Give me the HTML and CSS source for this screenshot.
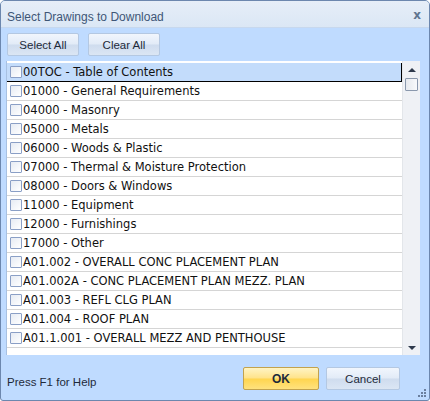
FILE: index.html
```html
<!DOCTYPE html>
<html>
<head>
<meta charset="utf-8">
<link rel="stylesheet" href="styles.css">
</head>
<body>
<div class="window">
  <div class="titlebar">
    <span class="title">Select Drawings to Download</span>
    <span class="close">x</span>
  </div>
  <div class="toolbar">
    <button class="btn">Select All</button>
    <button class="btn">Clear All</button>
  </div>
  <div class="listbox">
    <div class="items">
      <div class="row selected"><span class="cb"></span>00TOC - Table of Contents</div>
      <div class="row"><span class="cb"></span>01000 - General Requirements</div>
      <div class="row"><span class="cb"></span>04000 - Masonry</div>
      <div class="row"><span class="cb"></span>05000 - Metals</div>
      <div class="row"><span class="cb"></span>06000 - Woods &amp; Plastic</div>
      <div class="row"><span class="cb"></span>07000 - Thermal &amp; Moisture Protection</div>
      <div class="row"><span class="cb"></span>08000 - Doors &amp; Windows</div>
      <div class="row"><span class="cb"></span>11000 - Equipment</div>
      <div class="row"><span class="cb"></span>12000 - Furnishings</div>
      <div class="row"><span class="cb"></span>17000 - Other</div>
      <div class="row"><span class="cb"></span>A01.002 - OVERALL CONC PLACEMENT PLAN</div>
      <div class="row"><span class="cb"></span>A01.002A - CONC PLACEMENT PLAN MEZZ. PLAN</div>
      <div class="row"><span class="cb"></span>A01.003 - REFL CLG PLAN</div>
      <div class="row"><span class="cb"></span>A01.004 - ROOF PLAN</div>
      <div class="row"><span class="cb"></span>A01.1.001 - OVERALL MEZZ AND PENTHOUSE</div>
    </div>
    <div class="scrollbar">
      <div class="arrow up"></div>
      <div class="thumb"></div>
      <div class="track"></div>
      <div class="arrow down"></div>
    </div>
  </div>
  <div class="footer">
    <span class="help">Press F1 for Help</span>
    <button class="btn ok">OK</button>
    <button class="btn cancel">Cancel</button>
    <span class="grip">
      <svg width="9" height="9" viewBox="0 0 9 9">
        <rect x="6" y="0" width="2" height="2" fill="#6a7f9e"/>
        <rect x="3" y="3" width="2" height="2" fill="#6a7f9e"/>
        <rect x="6" y="3" width="2" height="2" fill="#6a7f9e"/>
        <rect x="0" y="6" width="2" height="2" fill="#6a7f9e"/>
        <rect x="3" y="6" width="2" height="2" fill="#6a7f9e"/>
        <rect x="6" y="6" width="2" height="2" fill="#6a7f9e"/>
      </svg>
    </span>
  </div>
</div>
</body>
</html>
```

FILE: styles.css
```css
html, body {
  margin: 0;
  padding: 0;
  background: #ffffff;
}
.window {
  box-sizing: border-box;
  width: 430px;
  height: 401px;
  border: 1px solid #6c87ae;
  border-radius: 5px 5px 3px 3px;
  background: #bfdbff;
  display: flex;
  flex-direction: column;
  position: relative;
  overflow: hidden;
  font-family: "DejaVu Sans", Verdana, sans-serif;
}
.titlebar {
  height: 27px;
  flex: none;
  box-sizing: border-box;
  background: linear-gradient(#e6eef8, #dbe7f5);
  border-bottom: 1px solid #c7d8ee;
  display: flex;
  align-items: center;
  padding: 0 8px 0 6px;
}
.title {
  flex: 1;
  font-family: "Liberation Sans", Arial, sans-serif;
  font-size: 12px;
  color: #3e5676;
  padding-top: 6px;
}
.close {
  font-family: "DejaVu Sans", sans-serif;
  font-size: 12px;
  font-weight: bold;
  color: #5f7590;
  padding-top: 2px;
}
.toolbar {
  display: flex;
  gap: 9px;
  padding: 5px 0 0 6px;
  height: 28px;
  box-sizing: border-box;
  flex: none;
}
.btn {
  width: 72px;
  height: 23px;
  margin: 0;
  padding: 0;
  border: 1px solid #b4c8e2;
  border-radius: 2px;
  background: linear-gradient(#f1f6fd 0%, #e2ebf7 48%, #cfdcee 52%, #dbe6f4 100%);
  font-family: "Liberation Sans", Arial, sans-serif;
  font-size: 11.5px;
  color: #1e2a3a;
}
.listbox {
  margin: 5px 0 0 5px;
  width: 414px;
  height: 294px;
  flex: none;
  background: #ffffff;
  border-left: 1px solid #a8c1e2;
  box-sizing: border-box;
  display: flex;
}
.items {
  flex: 1;
  padding-top: 2px;
  overflow: hidden;
}
.row {
  box-sizing: border-box;
  height: 19px;
  display: flex;
  align-items: center;
  border-bottom: 1px solid #d5d5d5;
  font-size: 11.5px;
  color: #111111;
  padding-left: 3px;
  white-space: nowrap;
}
.row.selected {
  background: #c3dcfb;
  border: 1px solid #000000;
  border-top: none;
  border-left: none;
  height: 19px;
}
.cb {
  width: 12px;
  height: 12px;
  box-sizing: border-box;
  border: 1px solid #8a9fc6;
  border-radius: 1px;
  background: linear-gradient(135deg, #e6ebf3, #ffffff);
  margin-right: 1px;
  flex: none;
}
.scrollbar {
  width: 17px;
  flex: none;
  background: #eff1f5;
  border-left: 1px solid #e3e6ea;
  display: flex;
  flex-direction: column;
  align-items: center;
}
.arrow {
  height: 17px;
  width: 100%;
  position: relative;
  flex: none;
}
.arrow::after {
  content: "";
  position: absolute;
  left: 5px;
  width: 0;
  height: 0;
  border-left: 4px solid transparent;
  border-right: 4px solid transparent;
}
.arrow.up::after {
  top: 7px;
  border-bottom: 4px solid #2f3a4c;
}
.arrow.down::after {
  bottom: 5px;
  border-top: 4px solid #2f3a4c;
}
.thumb {
  width: 13px;
  height: 13px;
  box-sizing: border-box;
  border: 1px solid #8a98ad;
  border-radius: 1px;
  background: linear-gradient(90deg, #e6e9ee, #f8f9fb);
  flex: none;
}
.track {
  flex: 1;
}
.footer {
  flex: 1;
  display: flex;
  align-items: center;
  padding: 2px 0 0 6px;
  position: relative;
}
.help {
  font-family: "Liberation Sans", Arial, sans-serif;
  font-size: 11.5px;
  color: #1e2a3a;
  flex: 1;
  padding-top: 6px;
}
.btn.ok {
  width: 76px;
  font-weight: bold;
  font-size: 12px;
  border: 1px solid #c2a24e;
  background: linear-gradient(#fff4c4 0%, #ffe38a 48%, #ffd54f 52%, #ffe27e 100%);
}
.btn.cancel {
  width: 74px;
  margin-left: 7px;
  margin-right: 29px;
}
.grip {
  position: absolute;
  right: 2px;
  bottom: 2px;
  width: 9px;
  height: 9px;
  line-height: 0;
}
```
